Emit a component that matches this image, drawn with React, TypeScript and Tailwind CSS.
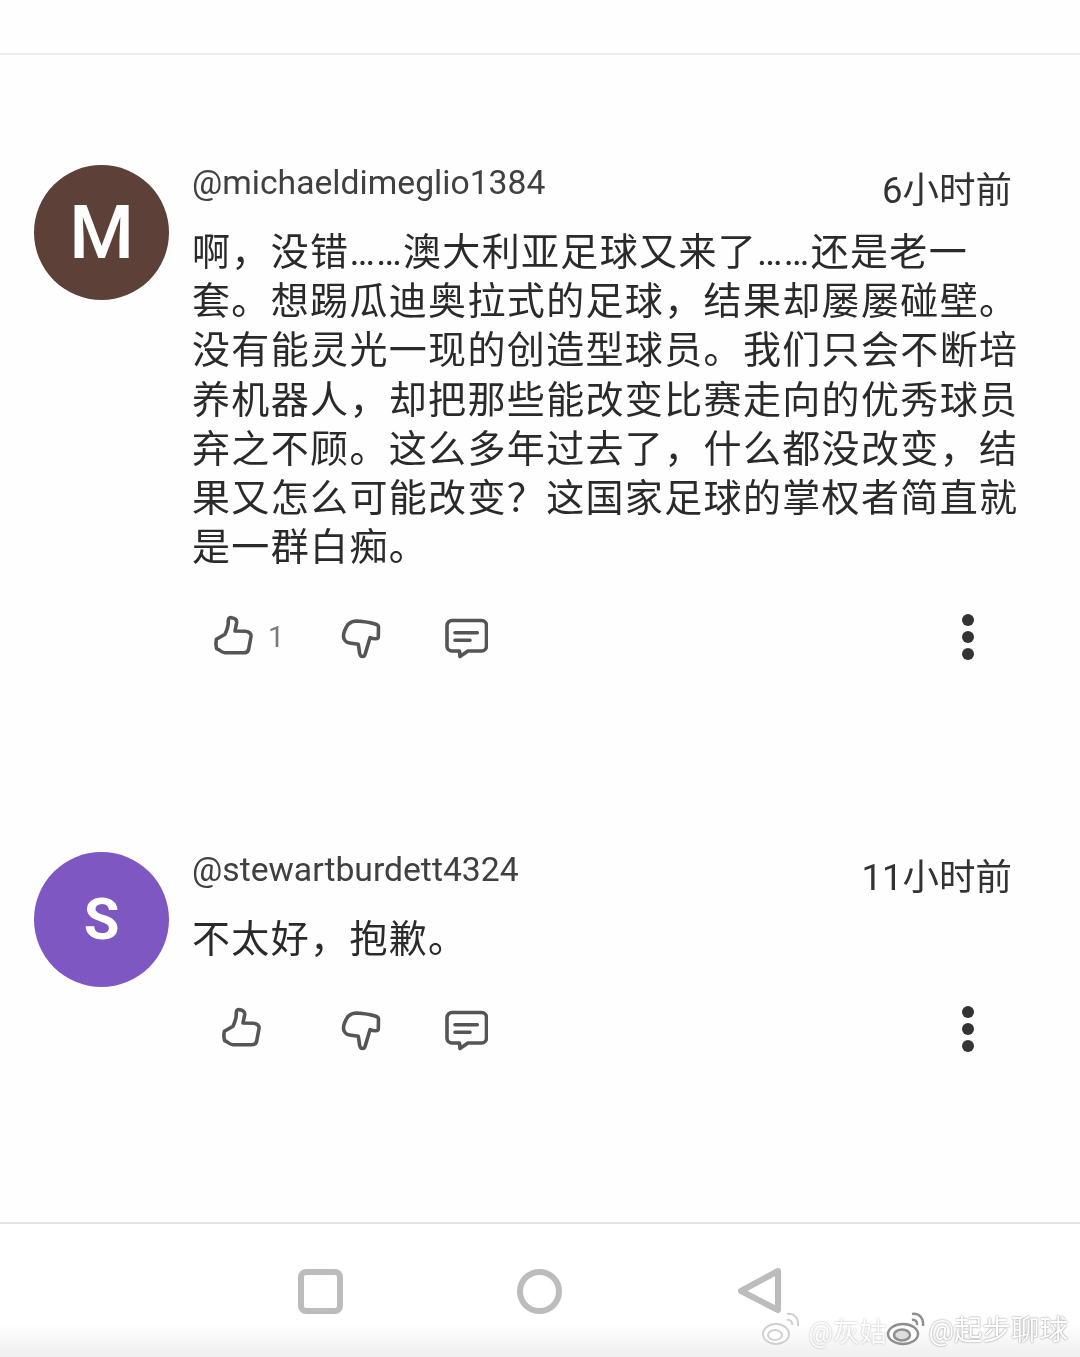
const font = "[font-family:Roboto,'Noto_Sans_CJK_SC',sans-serif]";

function ThumbUp() {
  return (
    <svg width="44" height="44" viewBox="0 0 44 44" fill="none" stroke="#555555" strokeWidth="3.6" strokeLinejoin="round" strokeLinecap="round" className="shrink-0">
      <path d="M18.7 2.5 C22 3 25 4.5 24.7 7.5 L23 16 L33.5 16.2 C37 16.5 39.3 18.5 39 21.5 L36.6 34.5 C36 37 34 37.8 31.3 37.8 L13 37.8 C10 37.8 8 35 4.6 33.5 C3.6 30 3.6 27.5 4.4 24.3 L13 19.3 C15 15 16.5 10 16.3 6 C16.3 4 17 2.5 18.7 2.5 Z" />
    </svg>
  );
}

function ThumbDown() {
  return (
    <svg width="44" height="44" viewBox="0 0 44 44" fill="none" stroke="#555555" strokeWidth="3.6" strokeLinejoin="round" strokeLinecap="round" className="shrink-0">
      <path d="M8 9.5 C10.5 7 13 6 16.7 6 C23 6.5 29 7 33 8.5 C36.5 9.5 38.5 10 38.5 12 L38.3 22 C38.3 24.3 34 24 30 22.7 L25.5 38 C25 41 24 41.5 22.5 41.5 C20.5 41.5 20 40.5 19.6 38 L18.3 29.3 L9.5 28 C6 27.5 3.5 24.5 3.5 21 C3.5 17 6 12.5 8 9.5 Z" />
    </svg>
  );
}

function CommentIcon() {
  return (
    <svg width="44" height="44" viewBox="0 0 44 44" fill="none" stroke="#555555" strokeWidth="3.6" strokeLinejoin="round" strokeLinecap="round" className="shrink-0">
      <path d="M8 5.5 H37.5 A5 5 0 0 1 42.5 10.5 V31 A5 5 0 0 1 37.5 36 H24 L16 41.5 L15.5 36 H8 A5 5 0 0 1 3 31 V10.5 A5 5 0 0 1 8 5.5 Z" />
      <path d="M11 17.7 H33.3 M11 25.3 H26" />
    </svg>
  );
}

function Dots() {
  return (
    <div className="flex flex-col gap-[5px] shrink-0">
      <span className="w-[12px] h-[12px] rounded-full bg-[#333333]" />
      <span className="w-[12px] h-[12px] rounded-full bg-[#333333]" />
      <span className="w-[12px] h-[12px] rounded-full bg-[#333333]" />
    </div>
  );
}

function Actions({ count, thumbClass }: { count?: string; thumbClass: string }) {
  return (
    <div className="flex items-center h-[46px] ml-[19px] mr-[44px]">
      <div className={`flex items-center w-[128px] ${thumbClass}`}>
        <ThumbUp />
        {count && <span className="ml-[12px] text-[29px] leading-[44px] text-[#7a7a7a]">{count}</span>}
      </div>
      <div className="w-[104px]">
        <ThumbDown />
      </div>
      <CommentIcon />
      <div className="ml-auto">
        <Dots />
      </div>
    </div>
  );
}

function Comment({
  initial,
  color,
  name,
  time,
  lines,
  count,
  thumbClass,
  bodyGap,
  className,
}: {
  initial: string;
  color: string;
  name: string;
  time: string;
  lines: string[];
  count?: string;
  thumbClass: string;
  bodyGap: string;
  className: string;
}) {
  return (
    <div className={`flex pl-[34px] ${className}`}>
      <div className={`w-[135px] h-[135px] rounded-full flex items-center justify-center text-white shrink-0 ${color}`}>
        {initial}
      </div>
      <div className="ml-[24px] w-[825px]">
        <div className="flex justify-between h-[63px]">
          <span className="text-[33.7px] leading-[36px] text-[#404040] h-[36px] -ml-[1px]">{name}</span>
          <span className="text-[36.5px] leading-[52px] text-[#333333] mr-[6px]">{time}</span>
        </div>
        <div className="text-[38px] tracking-[1.35px] leading-[49.2px] text-[#2a2a2a] whitespace-nowrap -ml-[1px]">
          {lines.map((l) => (
            <div key={l}>{l}</div>
          ))}
        </div>
        <div className={bodyGap}>
          <Actions count={count} thumbClass={thumbClass} />
        </div>
      </div>
    </div>
  );
}

export default function App() {
  return (
    <div className={`w-[1080px] h-[1357px] bg-[#fefefe] flex flex-col overflow-hidden relative blur-[0.5px] ${font}`}>
      <div className="h-[55px] border-b-2 border-[#ececec] shrink-0" />
      <div className="flex-1 min-h-0">
        <Comment
          className="mt-[110px]"
          initial="M"
          color="bg-[#5d4037] text-[74px] font-medium"
          name="@michaeldimeglio1384"
          time="6小时前"
          lines={[
            "啊，没错……澳大利亚足球又来了……还是老一",
            "套。想踢瓜迪奥拉式的足球，结果却屡屡碰壁。",
            "没有能灵光一现的创造型球员。我们只会不断培",
            "养机器人，却把那些能改变比赛走向的优秀球员",
            "弃之不顾。这么多年过去了，什么都没改变，结",
            "果又怎么可能改变？这国家足球的掌权者简直就",
            "是一群白痴。",
          ]}
          count="1"
          thumbClass="ml-0"
          bodyGap="mt-[42px]"
        />
        <Comment
          className="mt-[192px]"
          initial="S"
          color="bg-[#7e57c2] text-[58px] font-bold"
          name="@stewartburdett4324"
          time="11小时前"
          lines={["不太好，抱歉。"]}
          thumbClass="pl-[8px]"
          bodyGap="mt-[41px]"
        />
      </div>
      <div className="h-[135px] shrink-0 border-t-2 border-[#e4e4e4] bg-gradient-to-b from-[#ffffff] from-75% to-[#efefef] flex items-start pt-[44px] relative">
        <div className="flex items-center gap-[174px] ml-[298px]">
          <div className="w-[45px] h-[45px] rounded-[8px] border-[6px] border-[#bcbcbc]" />
          <div className="w-[45px] h-[45px] rounded-full border-[6px] border-[#bcbcbc]" />
          <svg width="46" height="46" viewBox="0 0 46 46" fill="none" stroke="#bcbcbc" strokeWidth="6" strokeLinejoin="round" strokeLinecap="round">
            <path d="M42 3 L5 23 L42 42 Z" />
          </svg>
        </div>
        <div className="absolute right-[12px] bottom-[8px] flex items-center h-[36px] text-[28.5px] text-white [text-shadow:0_0_2px_#777777]">
          <svg width="46" height="38" viewBox="0 0 46 38" fill="none" className="absolute left-[-167px] top-[-3px]" stroke="#d0d0d0" strokeWidth="2">
            <ellipse cx="15" cy="24" rx="13" ry="10" fill="#ffffff" />
            <ellipse cx="14" cy="25" rx="7" ry="5" />
            <path d="M26 4 C33 3 38 8 37 16 M26 10 C29 9 32 12 31 15" />
          </svg>
          <span className="absolute left-[-120px] top-0 text-[27px] whitespace-nowrap opacity-60">@灰姑</span>
          <svg width="46" height="38" viewBox="0 0 46 38" fill="none" className="absolute left-[-42px] top-[-3px]" stroke="#8f8f8f" strokeWidth="2.5">
            <ellipse cx="17" cy="24" rx="15" ry="10" fill="#ffffff" />
            <ellipse cx="16" cy="25" rx="8" ry="5.5" fill="#dddddd" />
            <path d="M26 4 C33 3 38 8 37 16 M26 10 C29 9 32 12 31 15" />
          </svg>
          <span className="whitespace-nowrap">@起步聊球</span>
        </div>
      </div>
    </div>
  );
}
